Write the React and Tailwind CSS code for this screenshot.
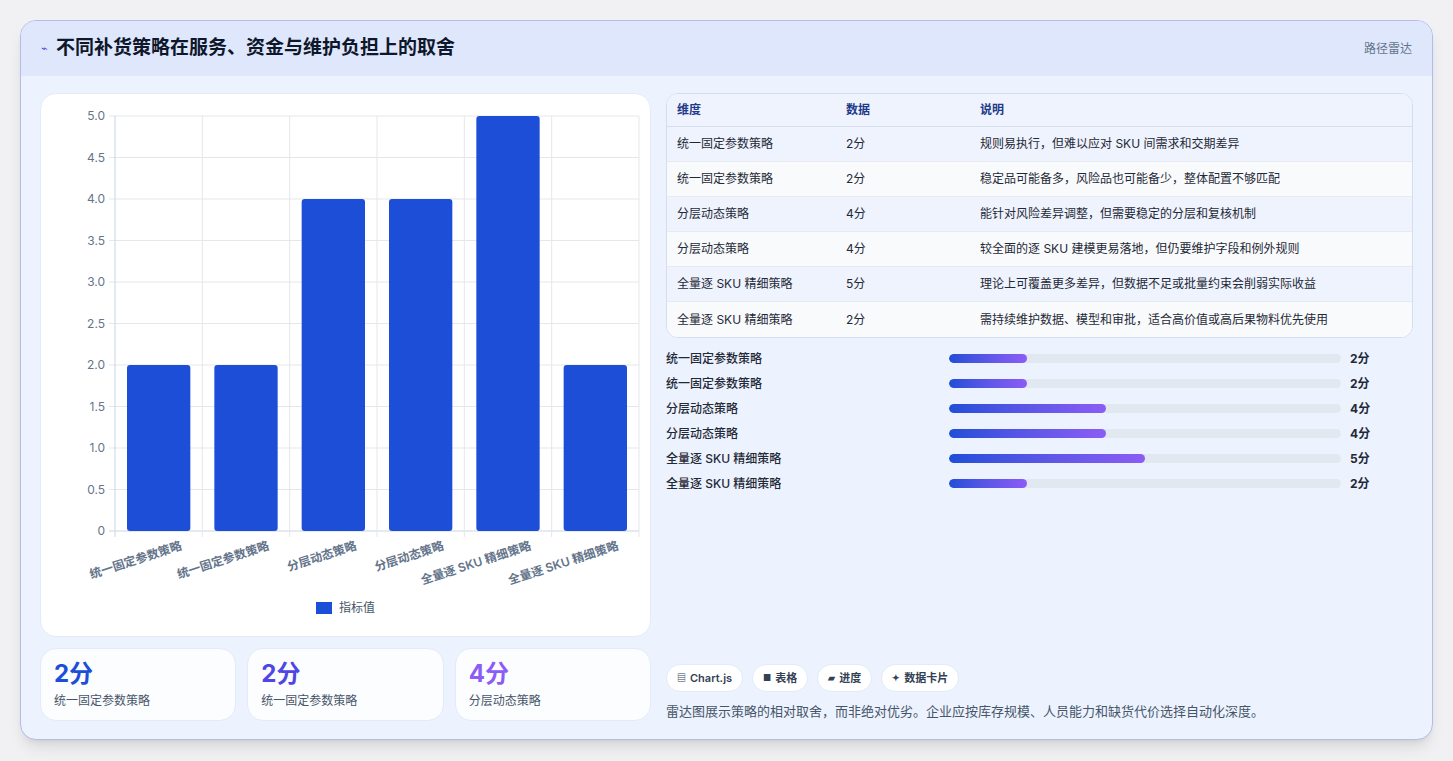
const ff = { fontFamily: 'Inter, "Noto Sans CJK SC", sans-serif' };

const labels = ['统一固定参数策略', '统一固定参数策略', '分层动态策略', '分层动态策略', '全量逐 SKU 精细策略', '全量逐 SKU 精细策略'];
const values = [2, 2, 4, 4, 5, 2];
const notes = [
  '规则易执行，但难以应对 SKU 间需求和交期差异',
  '稳定品可能备多，风险品也可能备少，整体配置不够匹配',
  '能针对风险差异调整，但需要稳定的分层和复核机制',
  '较全面的逐 SKU 建模更易落地，但仍要维护字段和例外规则',
  '理论上可覆盖更多差异，但数据不足或批量约束会削弱实际收益',
  '需持续维护数据、模型和审批，适合高价值或高后果物料优先使用',
];

function Chart() {
  // plot area in card coordinates
  const x0 = 74, x1 = 598, yTop = 22, yBot = 437;
  const slot = (x1 - x0) / 6;
  const ticks = [0, 0.5, 1, 1.5, 2, 2.5, 3, 3.5, 4, 4.5, 5];
  const y = (v) => yBot - (v / 5) * (yBot - yTop);
  return (
    <svg width="610" height="543" style={ff}>
      {ticks.map((t) => (
        <g key={t}>
          <line x1={x0 - 6} x2={x1} y1={y(t)} y2={y(t)} stroke={t === 0 ? '#cbd5e1' : '#e5e7eb'} />
          <text x={x0 - 10} y={y(t) + 4} fontSize="12" fill="#64748b" textAnchor="end">{t === 0 ? '0' : t.toFixed(1)}</text>
        </g>
      ))}
      {[0, 1, 2, 3, 4, 5, 6].map((i) => (
        <line key={i} x1={x0 + i * slot} x2={x0 + i * slot} y1={yTop} y2={yBot + 6} stroke={i === 0 ? '#cbd5e1' : '#e5e7eb'} />
      ))}
      {values.map((v, i) => (
        <rect key={i} x={x0 + i * slot + 12} y={y(v)} width={slot - 24} height={yBot - y(v)} rx="3" fill="#1d4ed8" />
      ))}
      {labels.map((l, i) => (
        <text key={i} x={x0 + (i + 0.5) * slot + 24} y={yBot + 18} fontSize="12" fontWeight="600" fill="#64748b" textAnchor="end" transform={`rotate(-18 ${x0 + (i + 0.5) * slot + 24} ${yBot + 18})`}>{l}</text>
      ))}
      <rect x="275" y="508" width="16" height="12" fill="#1d4ed8" />
      <text x="298" y="518" fontSize="12" fill="#475569">指标值</text>
    </svg>
  );
}

function Stat({ v, label, color }) {
  return (
    <div className="flex-1 h-[73px] rounded-2xl bg-white/80 border border-[#e3eaf8] px-[13px] pt-[9px]">
      <div className={`text-[24px] font-bold leading-[32px] ${color}`}>{v}</div>
      <div className="text-[12px] text-[#475569] mt-[2px]">{label}</div>
    </div>
  );
}

export default function App() {
  return (
    <div className="w-[1453px] h-[761px] bg-[#f1f1f3] pt-[20px] pl-[20px]" style={ff}>
      <div className="w-[1413px] h-[720px] rounded-2xl border border-[#b3bde8] bg-[#edf3fe] overflow-hidden shadow-lg flex flex-col">
        <div className="h-[55px] bg-[#dfe7fd] flex items-center justify-between px-[20px] shrink-0">
          <div className="flex items-center gap-[8px]">
            <span className="text-[#4f46e5] text-[11px]">⌁</span>
            <span className="text-[19px] font-bold text-[#0f172a]">不同补货策略在服务、资金与维护负担上的取舍</span>
          </div>
          <span className="text-[12px] text-[#64748b]">路径雷达</span>
        </div>
        <div className="flex gap-[15px] px-[19px] pt-[17px]">
          <div className="w-[611px] flex flex-col">
            <div className="h-[544px] bg-white rounded-2xl border border-[#e3eaf8]">
              <Chart />
            </div>
            <div className="flex gap-[11px] mt-[11px]">
              <Stat v="2分" label="统一固定参数策略" color="text-[#1d4ed8]" />
              <Stat v="2分" label="统一固定参数策略" color="text-[#4f46e5]" />
              <Stat v="4分" label="分层动态策略" color="text-[#8b5cf6]" />
            </div>
          </div>
          <div className="flex-1 flex flex-col">
            <div className="rounded-xl border border-[#d5deef] overflow-hidden bg-white text-[12px]">
              <div className="flex h-[33px] items-center bg-[#eef3fd] font-semibold text-[#1e3a8a] border-b border-[#d5deef]">
                <div className="w-[179px] pl-[10px]">维度</div>
                <div className="w-[134px]">数据</div>
                <div className="flex-1">说明</div>
              </div>
              {labels.map((l, i) => (
                <div key={i} className={`flex h-[35px] items-center text-[#1f2937] ${i % 2 === 0 ? 'bg-[#eef3fd]' : 'bg-[#f8fafc]'} ${i < 5 ? 'border-b border-[#e5eaf3]' : ''}`}>
                  <div className="w-[179px] pl-[10px]">{l}</div>
                  <div className="w-[134px]">{values[i]}分</div>
                  <div className="flex-1">{notes[i]}</div>
                </div>
              ))}
            </div>
            <div className="mt-[8px] flex flex-col">
              {labels.map((l, i) => (
                <div key={i} className="flex items-center h-[25px] text-[12px] text-[#1f2937]">
                  <div className="w-[283px] font-medium">{l}</div>
                  <div className="w-[392px] h-[9px] rounded-full bg-[#e2e8f0] overflow-hidden">
                    <div className="h-full rounded-full bg-gradient-to-r from-[#1d4ed8] to-[#8b5cf6]" style={{ width: `${values[i] * 10}%` }} />
                  </div>
                  <div className="ml-[9px] font-bold">{values[i]}分</div>
                </div>
              ))}
            </div>
            <div className="flex gap-[9px] mt-[168px] text-[11px] font-semibold text-[#334155]">
              {[['▤', 'Chart.js'], ['■', '表格'], ['▰', '进度'], ['✦', '数据卡片']].map(([ic, t]) => (
                <div key={t} className="h-[28px] px-[10px] rounded-full bg-white border border-[#e3eaf8] flex items-center gap-[4px]">
                  <span className="text-[9px]">{ic}</span>{t}
                </div>
              ))}
            </div>
            <div className="mt-[10px] text-[13px] text-[#475569]">雷达图展示策略的相对取舍，而非绝对优劣。企业应按库存规模、人员能力和缺货代价选择自动化深度。</div>
          </div>
        </div>
      </div>
    </div>
  );
}
